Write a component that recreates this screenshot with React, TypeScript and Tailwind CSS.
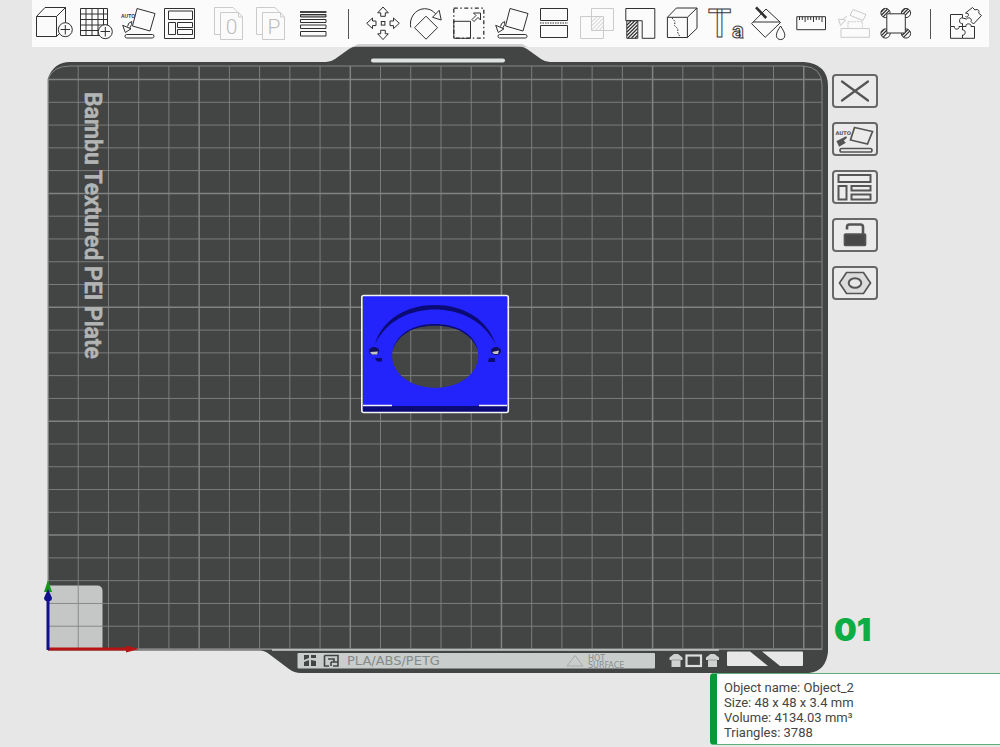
import React from "react";

interface Tool {
  label: string;
  disabled?: boolean;
  icon: React.ReactNode;
}

const quarterTurns = [0, 90, 180, 270];

const layFlatIcon = (
  <>
    <path d="M20 8.5 38 13.5 33 31 15.5 26Z" />
    <path d="M14.7 21.5Q11 22.5 10.5 26.5M14.7 21.5V24.5L12.5 28.5M5.7 25.3 14 28.8 8.3 32.5Z" />
    <rect x="8" y="34.5" width="29" height="3.5" rx="1.7" />
  </>
);

const fileTools: Tool[] = [
  {
    label: "Add object",
    icon: (
      <>
        <path d="M3.5 16.5H23.5V36.5H3.5ZM3.5 16.5 12 7.5H32.5V23M23.5 16.5 32.5 7.5M23.5 36.5 26 34" />
        <circle cx="32.3" cy="29.7" r="7" fill="#fbfbfb" />
        <path d="M27.5 29.5H37M32.3 25V34.5" />
      </>
    ),
  },
  {
    label: "Add plate",
    icon: (
      <>
        <path d="M5.5 8.5H32.5V35.5H5.5ZM11 8.5V35.5M17 8.5V35.5M23 8.5V35.5M28.5 8.5V35.5M5.5 14H32.5M5.5 19.5H32.5M5.5 25H32.5M5.5 30.5H32.5" />
        <circle cx="30.3" cy="31.7" r="7" fill="#fbfbfb" />
        <path d="M25.5 31.5H35M30.3 27V36.5" />
      </>
    ),
  },
  {
    label: "Auto orient",
    icon: (
      <>
        {layFlatIcon}
        <text x="4" y="17.5" stroke="none" fill="#333" className="font-['Liberation_Sans'] text-[5px] font-bold">AUTO</text>
      </>
    ),
  },
  {
    label: "Arrange",
    icon: <path d="M5.5 8.5H35.5V38.5H5.5ZM9.5 11H33.5V19.5H9.5ZM9.5 22.5H16.5V34.5H9.5ZM18.5 22.5H33.5V27.5H18.5ZM18.5 29.5H33.5V34.5H18.5Z" />,
  },
];

const pageOutline = (
  <path d="M11 34.5H5.5V7.5H24L28.5 12M11.5 12.5H29.5L33.5 17V39.5H11.5ZM29.5 12.5V17H33.5" />
);

const splitTools: Tool[] = [
  {
    label: "Split to objects",
    disabled: true,
    icon: (
      <>
        {pageOutline}
        <text x="22.5" y="33.5" textAnchor="middle" stroke="none" fill="#bdbdbd" className="font-[Roboto] text-[21px] font-light">0</text>
      </>
    ),
  },
  {
    label: "Split to parts",
    disabled: true,
    icon: (
      <>
        {pageOutline}
        <text x="23" y="33.5" textAnchor="middle" stroke="none" fill="#bdbdbd" className="font-[Roboto] text-[21px] font-light">P</text>
      </>
    ),
  },
  {
    label: "Variable layer height",
    icon: (
      <>
        <path d="M7 12H33.5" strokeWidth="1.8" />
        <path d="M7.5 14.5H33V17H7.5Z" fill="#aaa" />
        <path d="M7.5 19.5H33V22.5H7.5ZM7.5 25H33V28.5H7.5ZM7.5 31.5H33V36H7.5Z" />
      </>
    ),
  },
];

const editTools: Tool[] = [
  {
    label: "Move",
    icon: (
      <>
        <rect x="19.3" y="21.5" width="3.6" height="3.6" />
        {quarterTurns.map((deg) => (
          <path key={deg} transform={`rotate(${deg} 21 23.3)`} d="M21 7 26.3 12.8H23.3V16.3H18.7V12.8H15.7Z" />
        ))}
      </>
    ),
  },
  {
    label: "Rotate",
    icon: <path d="M21 16.2 32.5 27.7 21 39.2 9.5 27.7ZM5.8 27.5C3.8 19 9.5 9 19.5 8.7 24 8.7 28 10.5 30.5 13.8M27.5 17.3 34.2 10.3 36.2 20Z" />,
  },
  {
    label: "Scale",
    icon: (
      <>
        <rect x="5.8" y="8.2" width="30" height="30" strokeDasharray="4 2.5 1.5 2.5" strokeWidth="1.3" />
        <path d="M5.8 21.3H22.5V38.3H5.8ZM24 19.5 28 15.5 25.5 13H32.5V20L30 17.5 26 21.5Z" />
      </>
    ),
  },
  { label: "Lay on face", icon: layFlatIcon },
  {
    label: "Cut",
    icon: (
      <>
        <path d="M7.5 8.5H34.5V20.5H7.5ZM7.5 25.5H34.5V37.5H7.5Z" />
        <path d="M7 23H35" strokeDasharray="1.5 1" />
      </>
    ),
  },
  {
    label: "Mesh boolean",
    disabled: true,
    icon: <path d="M4.5 16.5H27.5V38.5H4.5ZM15.5 8.5H37.5V30.5H15.5ZM15.5 22 21 16.5M15.5 26 25 16.5M15.5 30 27.5 18M19 30.5 27.5 22M23 30.5 27.5 26" />,
  },
  {
    label: "Support painting",
    icon: (
      <>
        <path d="M6.8 8.5H35.8V38.3H23.2V20.7H6.8ZM7.8 20.7H18.8V38.3H7.8Z" />
        <path d="M8 25 12 21M8 28.5 15.5 21M8 32 18.5 21.5M8 35.5 18.5 25M9 38 18.5 28.5M12.5 38 18.5 32M16 38 18.5 35.5" strokeWidth="1.2" />
      </>
    ),
  },
  {
    label: "Seam painting",
    icon: (
      <>
        <path d="M6.4 17.3H26.4V37.5H6.4ZM6.4 17.3 15.4 8H36V28.3L26.4 37.5M26.4 17.3 36 8" />
        <path d="M11 18 14 21.5 13.5 25.5 17 29 16.5 32 19 37" strokeDasharray="1.6 1.2" />
      </>
    ),
  },
  {
    label: "Text shape",
    icon: (
      <g fill="none" className="opacity-95">
        <text x="4" y="37" className="font-[Roboto] text-[38px] font-medium">T</text>
        <text x="28" y="38" className="font-[Roboto] text-[22px] font-bold">a</text>
      </g>
    ),
  },
  {
    label: "Color painting",
    icon: (
      <>
        <path d="M19 9 33.6 22.5 18.2 37.3 4.6 23.7ZM6 22H33M33.6 26C31 30 29.4 32.5 29.4 35.4 29.4 41 37.8 41 37.8 35.4 37.8 32.5 36 30 33.6 26Z" />
        <path d="M9 7.3 19.2 18" strokeWidth="2.6" />
      </>
    ),
  },
  {
    label: "Measure",
    icon: <path d="M6.8 16.7H35.5V29.7H6.8ZM9.5 17V20M12.3 17V20M15.1 17V22M17.9 17V20M20.7 17V20M23.5 17V22M26.3 17V20M29.1 17V20M32 17V22" />,
  },
  {
    label: "Assembly view",
    disabled: true,
    icon: (
      <>
        <path d="M9 28.5H37.4V37.3H9ZM21 9.5 34 14.5 31 20.5 18 15.3ZM6.5 19 13.5 20 8.5 25.5ZM11 20Q12 17 15 16.5" />
        <path d="M16 27.5V21.7H30.4V27.5" strokeDasharray="2 1" />
      </>
    ),
  },
  {
    label: "Explode",
    icon: (
      <>
        {[[10.5, 13], [31, 13], [10.5, 33.5], [31, 33.5]].map(([cx, cy]) => (
          <g key={`${cx}-${cy}`}>
            <circle cx={cx} cy={cy} r="4.6" />
            <path d={`M${cx - 4} ${cy + 2}l6-6M${cx - 2.5} ${cy + 3.8}l6.4-6.4M${cx - 4.4} ${cy - 1}l3.4-3.4`} strokeWidth="1.2" />
          </g>
        ))}
        <rect x="11.8" y="13.8" width="18.5" height="19.2" rx="1" fill="#fbfbfb" />
      </>
    ),
  },
];

const assembleTool: Tool = {
  label: "Assemble",
  icon: (
    <path d="M18.5 18V14.5H6.5V26.5H10.5C9.5 30 16 30 15 26.5H18.5V23.5C14.5 24.5 14.500 17 18.5 18ZM6.5 26.5V38.3H18.5V35C22 36 22 29 18.5 30V26.5M18.5 38.3H30.5V26.5H27C28 23 21 23 22 26.5H18.5M21.5 16.500C23 18 25.500 15.500 24 13.500L21.500 13 28.500 7.500 31 10C34 8.500 36 11 34.500 13L37.500 15.500 29.500 24 27 21.500C28.500 18.500 24.500 16.500 22.500 19L18.500 18" />
  ),
};

const plateTools: Tool[] = [
  {
    label: "Delete plate",
    icon: <path d="M9.5 7.5 35.5 26.5M35.5 7.5 9.5 26.5" strokeWidth="2.2" strokeLinecap="round" />,
  },
  {
    label: "Auto orient plate",
    icon: (
      <>
        <path d="M22 5.5 40 9.5 35 22 18 18Z" />
        <path d="M5 19.5 14 15 10 18.5 12 20.5 7 23.5Z" fill="#555" />
        <rect x="7.5" y="26.5" width="32" height="3.5" rx="1.7" />
        <text x="3" y="12.5" stroke="none" fill="#555" className="font-['DejaVu_Sans'] text-[5px] font-bold">AUTO</text>
      </>
    ),
  },
  {
    label: "Arrange plate",
    icon: <path d="M6 5H38V12H6ZM6 16H14V29.5H6ZM19 16H38V20.5H19ZM19 24.5H38V29.5H19Z" strokeWidth="2" />,
  },
  {
    label: "Lock plate",
    icon: (
      <>
        <path d="M14.5 11.5V9Q14.5 6.5 17 6.5H28Q30.5 6.5 30.5 9V17" strokeWidth="2.6" />
        <rect x="12" y="16" width="21" height="11.5" rx="1" fill="#484848" />
      </>
    ),
  },
  {
    label: "Plate settings",
    icon: (
      <>
        <path d="M14 6.5H31L38 17 31 27.5H14L7 17Z" fill="#dcdcdc" />
        <ellipse cx="22.5" cy="17" rx="6.3" ry="4.8" fill="#e7e7e7" strokeWidth="2" />
      </>
    ),
  },
];

// Bed grid: every fifth line counted from the origin is heavier
const columns = Array.from({ length: 26 }, (_, i) => 48 + i * 30.23);
const rows = Array.from({ length: 26 }, (_, i) => 649 - i * 22.78);

const ToolButton = ({ tool }: { tool: Tool }) => (
  <button type="button" aria-label={tool.label} disabled={tool.disabled} className="h-full w-[42px] shrink-0">
    <svg
      viewBox="0 0 42 47"
      fill="none"
      strokeWidth="1"
      className={tool.disabled ? "w-full stroke-[#cbcbcb]" : "w-full stroke-[#303030]"}
    >
      {tool.icon}
    </svg>
  </button>
);

const Divider = () => <div className="mx-[13px] h-[30px] w-px shrink-0 bg-[#555555]" />;

const Toolbar = () => (
  <header className="ml-8 mr-[11px] flex h-[47px] items-center bg-[#fbfbfb] pl-px pr-[3px]">
    <div className="flex h-full">
      {fileTools.map((tool) => <ToolButton key={tool.label} tool={tool} />)}
    </div>
    <div className="ml-2 flex h-full">
      {splitTools.map((tool) => <ToolButton key={tool.label} tool={tool} />)}
    </div>
    <Divider />
    <div className="flex h-full flex-1 justify-between">
      {editTools.map((tool) => <ToolButton key={tool.label} tool={tool} />)}
    </div>
    <Divider />
    <ToolButton tool={assembleTool} />
  </header>
);

const BuildPlate = () => (
  <svg viewBox="40 44 788 629" className="w-full" role="img" aria-label="Build plate">
    <defs>
      <clipPath id="bed">
        <path d="M48 79Q53 66 70 66H803Q822 67 822 85V649.5H48Z" />
      </clipPath>
    </defs>

    <path d="M352 47 358 44H522L528 47Z" fill="#d0d1d0" />
    <path
      d="M48 78Q54 62 70 62H326Q331 62 335 59L349 49Q352 46.7 356 46.7H520Q524 46.7 527 49L541 59Q545 62 550 62H804Q828 64 828 86V652Q826 671 809 673H301Q294 673 289 669L269 654Q265 650.5 260 650.5H48Z"
      fill="#434544"
    />
    <rect x="371" y="58.5" width="134" height="4" rx="2" fill="#dfe3df" />

    <path d="M48 585.5H97Q102.5 585.5 102.5 591V649H48Z" fill="#c5c7c6" />

    <g clipPath="url(#bed)" fill="none" stroke="#818382">
      {columns.map((x, i) => (
        <path key={x} d={`M${x} 66V649`} strokeWidth={i % 5 === 0 ? 1.5 : 0.9} />
      ))}
      {rows.map((y, i) => (
        <path key={y} d={`M48 ${y}H822`} strokeWidth={i % 5 === 0 ? 1.5 : 0.9} />
      ))}
    </g>
    <path d="M48 79Q53 66 70 66H803Q822 67 822 85V649.5H48Z" fill="none" stroke="#858786" />

    <text
      transform="translate(85 92) rotate(90)"
      fill="#b3b5b4"
      stroke="#b3b5b4"
      strokeWidth="0.7"
      className="font-[Roboto,sans-serif] text-[23px] font-medium"
    >
      Bambu Textured PEI Plate
    </text>

    {/* Printed strip along the front edge */}
    <path d="M272 650H719" stroke="#c9cccb" strokeWidth="1.5" />
    <rect x="297.5" y="653" width="357.5" height="15.5" rx="1" fill="#c9cecd" />
    <path d="M304 655H309V658L304 660ZM311 655H316V658H311ZM304 662 309 660V666H304ZM311 660 316 661V666H311Z" fill="#434544" />
    <path d="M324.5 655.5H338V666H333M324.5 655.5V666H329M328 659H334V662M331 662H338M331 662V666" fill="none" stroke="#434544" strokeWidth="1.6" />
    <text x="347" y="665" fill="#858a89" className="font-['DejaVu_Sans',sans-serif] text-[13px]">PLA/ABS/PETG</text>
    <path d="M575 655.5 583 666H567Z" fill="none" stroke="#a5aaa9" />
    <text fill="#8a8f8e" className="font-['DejaVu_Sans',sans-serif] text-[8px]">
      <tspan x="588" y="661">HOT</tspan>
      <tspan x="588" y="668">SURFACE</tspan>
    </text>
    <path d="M674 654H678L682.5 657.5V660H680.5V667H671.5V660H669.5V657.5ZM710.500 654H714.500L719 657.5V660H717V667H708V660H706V657.5Z" fill="#cfd2d1" />
    <path d="M671.5 660H680.5M708 660H717" stroke="#9a9d9c" />
    <rect x="686.5" y="655.5" width="14.5" height="10.5" fill="none" stroke="#dcdfde" strokeWidth="2.2" />
    <path d="M728 651.5H750L768 666H728Q727 666 727 665V652.5Q727 651.5 728 651.5ZM762 651.5H802Q803 651.5 803 652.5V665Q803 666 802 666H780Z" fill="#e7e7e7" />

    {/* Model */}
    <path
      fillRule="evenodd"
      d="M363 296H507V411.5H363ZM392 356A43.2 32 0 0 0 478.4 356A43.2 32 0 0 0 392 356Z"
      fill="#2323fb"
    />
    <rect x="362.5" y="406" width="145.5" height="6" fill="#0b0b78" />
    <path d="M375 344C383 318 408 305 435 305S487 318 495.5 344C483 320 459 309.5 435 309.5S387 320 375 344Z" fill="#0b0b78" />
    <path d="M392.5 350C398 332 415 324 435 324S473 332 478 350C470 332 454 325.8 435 325.8S400 332 392.5 350Z" fill="#0b0b78" />
    <ellipse cx="374" cy="351" rx="5" ry="4" fill="#10105f" />
    <ellipse cx="496" cy="351" rx="5" ry="4" fill="#10105f" />
    <path d="M370 352 378 351.5 377 354.5H372ZM492 352 499 350.5 498 354H494Z" fill="#c5c5c9" />
    <path d="M375 358H382V361.5H377ZM489 358H495V362H488Z" fill="#0b0b78" />
    <path d="M363 405.5H392M479 405.5H507" stroke="#f4f4f4" strokeWidth="1.5" />
    <rect x="361.8" y="295.5" width="146.5" height="117" rx="2" fill="none" stroke="#f4f4f4" strokeWidth="1.6" />

    {/* Axes */}
    <path d="M48 649H127" stroke="#b81414" strokeWidth="3" />
    <path d="M126 645.5 139 649 126 652.5Z" fill="#b81414" />
    <path d="M48 580 52 592H44Z" fill="#15951c" />
    <path d="M48 650V598" stroke="#10108c" strokeWidth="3" />
    <path d="M48 589 52 598Q52 601 48 601.5Q44 601 44 598Z" fill="#10108c" />
  </svg>
);

const PlateControls = () => (
  <aside className="flex flex-col items-start justify-between pb-7 pl-1 pt-[30px]">
    <div className="flex flex-col gap-[14px]">
      {plateTools.map((tool) => (
        <button
          key={tool.label}
          type="button"
          aria-label={tool.label}
          className="h-[34px] w-[46px] rounded-[4px] border-2 border-[#686868] bg-[#ebebeb]"
        >
          <svg viewBox="1.5 2 42 30" fill="none" strokeWidth="1.7" className="w-full stroke-[#555555]">
            {tool.icon}
          </svg>
        </button>
      ))}
    </div>
    <span className="pl-0.5 font-[Inter,sans-serif] text-[32px] font-black leading-[30px] text-[#0cad45]">01</span>
  </aside>
);

const ObjectInfo = () => (
  <section className="ml-auto w-[290px] rounded-l border-y border-l-[7px] border-y-[#63ad7a] border-l-[#089a36] bg-white pb-1 pl-[7px] pt-1.5 font-[Roboto,sans-serif] text-[13px] leading-[15px] text-[#454545]">
    <p>Object name: Object_2</p>
    <p>Size: 48 x 48 x 3.4 mm</p>
    <p>Volume: 4134.03 mm³</p>
    <p>Triangles: 3788</p>
  </section>
);

export default function App() {
  return (
    <div className="min-h-screen bg-[#e7e7e7]">
      <Toolbar />
      <main className="-mt-[3px]">
        <div className="grid grid-cols-[1fr_172px] pl-10">
          <BuildPlate />
          <PlateControls />
        </div>
        <ObjectInfo />
      </main>
    </div>
  );
}
